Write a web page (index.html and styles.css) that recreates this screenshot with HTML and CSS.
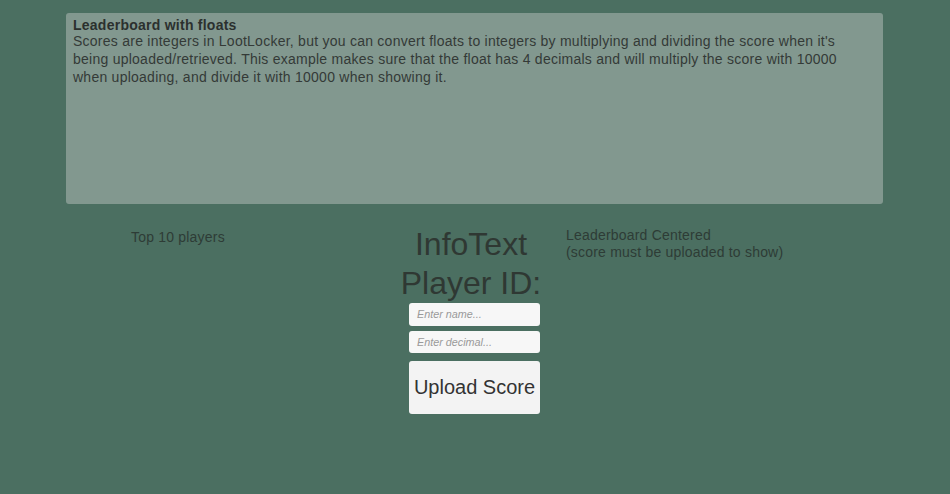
FILE: index.html
```html
<!DOCTYPE html>
<html>
<head>
<meta charset="utf-8">
<link rel="stylesheet" href="styles.css">
</head>
<body>
<div class="panel">
  <div class="panel-title">Leaderboard with floats</div>
  <div class="panel-body">Scores are integers in LootLocker, but you can convert floats to integers by multiplying and dividing the score when it's being uploaded/retrieved. This example makes sure that the float has 4 decimals and will multiply the score with 10000 when uploading, and divide it with 10000 when showing it.</div>
</div>
<div class="row">
  <div class="col-left">Top 10 players</div>
  <div class="col-mid">
    <div class="big">InfoText</div>
    <div class="big">Player ID:</div>
    <div class="field">Enter name...</div>
    <div class="field second">Enter decimal...</div>
    <div class="button">Upload Score</div>
  </div>
  <div class="col-right">Leaderboard Centered<br>(score must be uploaded to show)</div>
</div>
</body>
</html>
```
FILE: styles.css
```css
html, body {
  margin: 0;
  padding: 0;
}
body {
  background: #4b6f61;
  font-family: "Liberation Sans", Arial, sans-serif;
  color: #323a36;
  width: 950px;
  height: 494px;
  overflow: hidden;
}
.panel {
  margin: 13px 0 0 66px;
  width: 817px;
  height: 191px;
  box-sizing: border-box;
  padding: 5px 25px 0 7px;
  background: #82988f;
  border-radius: 3px;
  font-size: 14px;
  letter-spacing: 0.25px;
}
.panel-title {
  font-weight: bold;
  line-height: 15px;
  color: #2b302e;
}
.panel-body {
  margin-top: -1px;
  line-height: 18px;
  color: #343a37;
}
.row {
  margin-left: 66px;
  width: 817px;
  display: grid;
  grid-template-columns: 333px 144px 1fr;
  align-items: start;
}
.col-left {
  margin-top: 25px;
  padding-left: 65px;
  font-size: 14px;
  letter-spacing: 0.2px;
  line-height: 17px;
  color: #2e3c36;
}
.col-right {
  margin-top: 23px;
  padding-left: 23px;
  font-size: 14px;
  letter-spacing: 0.2px;
  line-height: 17px;
  color: #2e3c36;
}
.col-mid {
  margin-top: 21px;
  display: flex;
  flex-direction: column;
  align-items: center;
}
.big {
  font-size: 32px;
  line-height: 39px;
  color: #2f3833;
  white-space: nowrap;
}
.field {
  align-self: flex-start;
  margin-left: 10px;
  width: 131px;
  height: 23px;
  box-sizing: border-box;
  padding-left: 8px;
  background: #f7f7f7;
  border-radius: 3px;
  font-size: 10.8px;
  font-style: italic;
  line-height: 23px;
  color: #9a9a9a;
}
.field.second {
  margin-top: 5px;
  height: 22px;
  line-height: 22px;
}
.button {
  align-self: flex-start;
  margin-left: 10px;
  margin-top: 8px;
  width: 131px;
  height: 53px;
  box-sizing: border-box;
  background: #f3f3f3;
  border-radius: 3px;
  font-size: 20px;
  line-height: 53px;
  text-align: center;
  color: #333;
}
```
